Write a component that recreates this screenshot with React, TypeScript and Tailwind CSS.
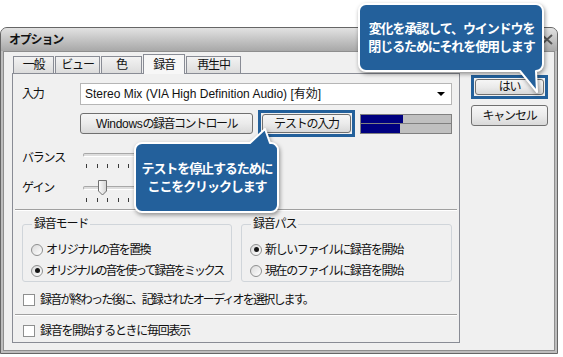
import React from "react";

const Button = ({ children, className = "" }: { children: React.ReactNode; className?: string }) => (
  <div
    className={`flex items-center justify-center rounded-[3px] border border-[#707070] bg-linear-to-b from-[#f6f6f6] via-[#ebebeb] to-[#d9d9d9] ${className}`}
  >
    {children}
  </div>
);

const Radio = ({ checked = false, label, track = "" }: { checked?: boolean; label: string; track?: string }) => (
  <div className="flex h-[21px] items-center">
    <span className="flex h-[12px] w-[12px] shrink-0 items-center justify-center rounded-full border border-[#8e8f8f] bg-linear-to-br from-[#dadada] to-white">
      {checked && <span className="h-[5px] w-[5px] rounded-full bg-[#151515]" />}
    </span>
    <span className={`ml-[3px] ${track}`}>{label}</span>
  </div>
);

const Check = ({ label, track = "" }: { label: string; track?: string }) => (
  <div className="flex h-[18px] items-center pl-[10px]">
    <span className="h-[12px] w-[12px] border border-[#8e8f8f] bg-white" />
    <span className={`ml-[5px] ${track}`}>{label}</span>
  </div>
);

const Ticks = ({ className = "" }: { className?: string }) => (
  <div className={`flex justify-between px-[3px] ${className}`}>
    {Array.from({ length: 17 }).map((_, i) => (
      <span key={i} className="h-[4px] w-px bg-[#3a3a3a]" />
    ))}
  </div>
);

const Track = () => (
  <div className="h-[4px] rounded-[2px] border border-[#a8a8a8] border-b-white bg-[#dedede]" />
);

const Tab = ({ label, active = false, w }: { label: string; active?: boolean; w: string }) =>
  active ? (
    <div
      className={`relative z-10 -mb-px flex h-[20px] items-center justify-center border border-b-0 border-[#898c95] bg-[#f7f7f7] ${w}`}
    >
      {label}
    </div>
  ) : (
    <div
      className={`flex h-[17px] items-center justify-center border border-b-0 border-[#898c95] bg-linear-to-b from-[#f3f3f3] to-[#dcdcdc] ${w}`}
    >
      {label}
    </div>
  );

const Bubble = ({
  className,
  w,
  h,
  path,
  lines,
  textClass,
}: {
  className: string;
  w: number;
  h: number;
  path: string;
  lines: string[];
  textClass: string;
}) => (
  <div className={`absolute ${className}`}>
    <svg
      width={w}
      height={h}
      viewBox={`0 0 ${w} ${h}`}
      className="drop-shadow-[1px_2px_2px_rgba(0,0,0,0.4)]"
    >
      <path d={path} fill="#23609b" stroke="#ffffff" strokeWidth="2" strokeLinejoin="round" />
    </svg>
    <div
      className={`absolute left-0 flex w-full flex-col items-center justify-center text-[13px] leading-[18px] font-bold tracking-[-1.1px] text-white ${textClass}`}
    >
      {lines.map((l) => (
        <span key={l}>{l}</span>
      ))}
    </div>
  </div>
);

export default function App() {
  return (
    <div className="relative h-[357px] w-[563px] overflow-hidden whitespace-nowrap bg-white font-['Liberation_Sans','Noto_Sans_CJK_JP',sans-serif] text-[12px] tracking-[-1.2px] text-[#111]">
      <div className="pt-[27px]">
        <div className="flex h-[327px] w-[558px] flex-col rounded-t-[7px] border border-[#666] bg-[#bdbdbd]">
          {/* title bar */}
          <div className="flex h-[23px] items-center justify-between rounded-t-[6px] bg-linear-to-b from-[#e2e2e2] to-[#a8a8a8] pr-[4px] pl-[8px]">
            <span className="font-bold">オプション</span>
            <svg width="12" height="11" viewBox="0 0 12 11">
              <path d="M1 1 L11 10 M11 1 L1 10" stroke="#555" strokeWidth="2" />
            </svg>
          </div>

          {/* body */}
          <div className="mx-[2px] mb-[2px] flex flex-1 border border-[#8e8e8e] bg-[#f0f0f0]">
            <div className="pt-[3px] pl-[8px]">
              <div className="flex h-[18px] items-end gap-[1px] pl-[1px]">
                <Tab label="一般" w="w-[41px]" />
                <Tab label="ビュー" w="w-[45px]" />
                <Tab label="色" w="w-[41px]" />
                <Tab label="録音" w="w-[42px]" active />
                <Tab label="再生中" w="w-[55px]" />
              </div>

              <div className="h-[270px] w-[448px] border border-[#898c95] pt-[9px]">
                {/* input row */}
                <div className="flex h-[22px] items-center pl-[9px]">
                  <span className="w-[58px]">入力</span>
                  <div className="flex h-[22px] w-[372px] items-center justify-between border border-[#b6b6b6] bg-white pr-[6px] pl-[4px] tracking-[0px]">
                    <span>Stereo Mix (VIA High Definition Audio) [有効]</span>
                    <svg width="8" height="4" viewBox="0 0 8 4">
                      <path d="M0 0 H8 L4 4 Z" fill="#000" />
                    </svg>
                  </div>
                </div>

                {/* buttons row */}
                <div className="mt-[5px] flex h-[27px] items-center pl-[67px]">
                  <Button className="h-[21px] w-[173px]">
                    <span className="tracking-[-0.3px]">Windows</span>
                    <span className="tracking-[-1.5px]">の録音コントロール</span>
                  </Button>
                  <div className="ml-[5px] h-[27px] w-[97px] border-[3px] border-[#23609b] p-[1px]">
                    <Button className="h-full w-full">テストの入力</Button>
                  </div>
                  <div className="ml-[5px] flex h-[20px] w-[92px] flex-col gap-px border border-[#808080] bg-[#808080]">
                    <div className="flex-1 bg-[#c0c0c0]">
                      <div className="h-full w-[42px] bg-[#000080]" />
                    </div>
                    <div className="flex-1 bg-[#c0c0c0]">
                      <div className="h-full w-[39px] bg-[#000080]" />
                    </div>
                  </div>
                </div>

                {/* balance */}
                <div className="mt-[10px] flex h-[23px] pl-[9px]">
                  <span className="mt-[3px] w-[61px] leading-[16px]">バランス</span>
                  <div className="w-[176px] pt-[6px]">
                    <Track />
                    <Ticks className="mt-[7px]" />
                  </div>
                </div>

                {/* gain */}
                <div className="mt-[10px] flex h-[23px] pl-[9px]">
                  <span className="w-[61px] leading-[16px]">ゲイン</span>
                  <div className="relative w-[176px] pt-[6px]">
                    <Track />
                    <Ticks className="mt-[8px]" />
                    <svg width="11" height="16" viewBox="0 0 11 16" className="absolute top-0 left-[14px]">
                      <defs>
                        <linearGradient id="th" x1="0" x2="1" y1="0" y2="0">
                          <stop offset="0" stopColor="#fdfdfd" />
                          <stop offset="1" stopColor="#d4d4d4" />
                        </linearGradient>
                      </defs>
                      <path d="M1.5 0.5 H9.5 V11 L5.5 15 L1.5 11 Z" fill="url(#th)" stroke="#707070" />
                    </svg>
                  </div>
                </div>

                <div className="mx-[2px] mt-[6px] h-[2px] border-t border-[#a0a0a0] border-b border-b-white" />

                {/* groups */}
                <div className="mt-[5px] flex gap-[9px] pl-[9px]">
                  <fieldset className="h-[66px] w-[210px] rounded-[3px] border border-[#d0d5da] pl-[8px]">
                    <legend className="ml-[1px] px-[2px] leading-[16px]">録音モード</legend>
                    <div className="mt-[7px]">
                      <Radio label="オリジナルの音を置換" track="tracking-[-1.6px]" />
                      <Radio label="オリジナルの音を使って録音をミックス" track="tracking-[-2.1px]" checked />
                    </div>
                  </fieldset>
                  <fieldset className="h-[66px] w-[211px] rounded-[3px] border border-[#d0d5da] pl-[8px]">
                    <legend className="ml-[1px] px-[2px] leading-[16px]">録音パス</legend>
                    <div className="mt-[7px]">
                      <Radio label="新しいファイルに録音を開始" track="tracking-[-1.4px]" checked />
                      <Radio label="現在のファイルに録音を開始" track="tracking-[-1.4px]" />
                    </div>
                  </fieldset>
                </div>

                <div className="mt-[9px]">
                  <Check label="録音が終わった後に、記録されたオーディオを選択します。" track="tracking-[-1.8px]" />
                </div>
                <div className="mx-[2px] mt-[5px] h-[2px] border-t border-[#a0a0a0] border-b border-b-white" />
                <div className="mt-[6px]">
                  <Check label="録音を開始するときに毎回表示" track="tracking-[-1.3px]" />
                </div>
              </div>
            </div>

            {/* right buttons */}
            <div className="mt-[23px] ml-[11px] flex flex-col gap-[6px]">
              <div className="h-[24px] w-[77px] border-[3px] border-[#23609b] p-[1px]">
                <Button className="h-full w-full">はい</Button>
              </div>
              <Button className="h-[21px] w-[77px]">キャンセル</Button>
            </div>
          </div>
        </div>
      </div>

      <Bubble
        className="top-[3px] left-[358px]"
        w={187}
        h={92}
        path="M8 1 H178 A7 7 0 0 1 185 8 V61 A7 7 0 0 1 178 68 L179 89 L162 68 H8 A7 7 0 0 1 1 61 V8 A7 7 0 0 1 8 1 Z"
        lines={["変化を承認して、ウインドウを", "閉じるためにそれを使用します"]}
        textClass="top-[1px] h-[67px]"
      />

      <Bubble
        className="top-[127px] left-[134px]"
        w={146}
        h={87}
        path="M8 16 H116 L131 2 L136 16 A7 7 0 0 1 144 23 V78 A7 7 0 0 1 137 85 H8 A7 7 0 0 1 1 78 V23 A7 7 0 0 1 8 16 Z"
        lines={["テストを停止するために", "ここをクリックします"]}
        textClass="top-[16px] h-[69px]"
      />
    </div>
  );
}
